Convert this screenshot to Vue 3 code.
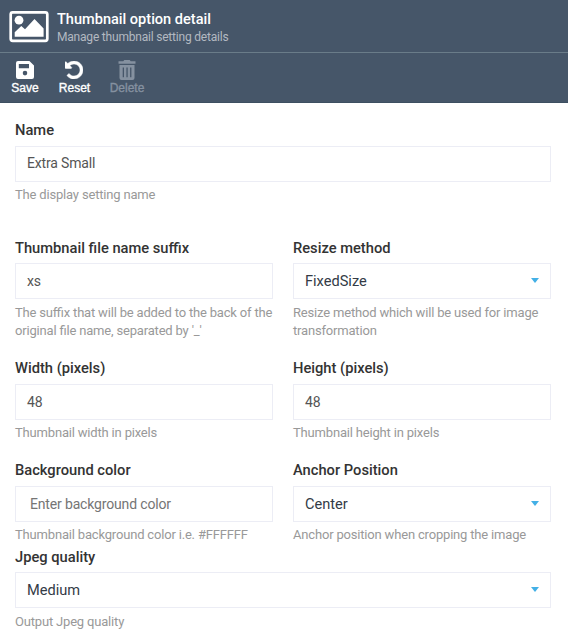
<script setup>
const rows = [
  { key: 'name', fields: [{ label: 'Name', value: 'Extra Small', hint: ['The display setting name'] }] },
  {
    key: 'suffix',
    fields: [
      { label: 'Thumbnail file name suffix', value: 'xs', hint: ['The suffix that will be added to the back of the', "original file name, separated by '_'"] },
      { label: 'Resize method', value: 'FixedSize', select: true, hint: ['Resize method which will be used for image', 'transformation'] },
    ],
  },
  {
    key: 'size',
    fields: [
      { label: 'Width (pixels)', value: '48', hint: ['Thumbnail width in pixels'] },
      { label: 'Height (pixels)', value: '48', hint: ['Thumbnail height in pixels'] },
    ],
  },
  {
    key: 'background',
    fields: [
      { label: 'Background color', value: 'Enter background color', placeholder: true, hint: ['Thumbnail background color i.e. #FFFFFF'] },
      { label: 'Anchor Position', value: 'Center', select: true, hint: ['Anchor position when cropping the image'] },
    ],
  },
  { key: 'quality', fields: [{ label: 'Jpeg quality', value: 'Medium', select: true, hint: ['Output Jpeg quality'] }] },
]
</script>

<template>
  <div class="blade">
    <header class="head">
      <svg class="picture" viewBox="0 0 40 32" width="40" height="32">
        <rect x="1.7" y="1.4" width="36.6" height="28.4" rx="2" fill="none" stroke="#fff" stroke-width="2.7" />
        <circle cx="10" cy="9.2" r="4.4" fill="#fff" />
        <path d="M5.7 25.7V21.3L12.3 15L16 18.2L25.5 8L34.6 17.4V25.7Z" fill="#fff" />
      </svg>
      <div>
        <div class="title">Thumbnail option detail</div>
        <div class="subtitle">Manage thumbnail setting details</div>
      </div>
    </header>
    <nav class="toolbar">
      <div class="tool save">
        <svg viewBox="0 0 18 18" width="18" height="18">
          <path fill="#fff" fill-rule="evenodd" d="M2 0H13.4L18 4.5V16Q18 18 16 18H2Q0 18 0 16V2Q0 0 2 0ZM2.8 3V7.3H13V3ZM9 9.8A2.3 2.3 0 1 0 9 14.4A2.3 2.3 0 1 0 9 9.8Z" />
        </svg>
        <span>Save</span>
      </div>
      <div class="tool reset">
        <svg viewBox="0 128 1536 1536" width="18" height="18">
          <path fill="#fff" stroke="#fff" stroke-width="40" d="M1536 896q0 156-61 298t-164 245-245 164-298 61q-172 0-327-72.500t-264-204.500q-7-10-6.500-22.500t8.500-20.500l137-138q10-9 25-9 16 2 23 12 73 95 179 147t225 52q104 0 198.500-40.500t163.500-109.500 109.500-163.500 40.500-198.500-40.500-198.500-109.500-163.500-163.500-109.500-198.500-40.500q-98 0-188 35.500t-160 101.500l137 138q31 30 14 69-17 40-59 40h-448q-26 0-45-19t-19-45v-448q0-42 40-59 39-17 69 14l130 129q107-101 244.500-156.500t284.500-55.500q156 0 298 61t245 164 164 245 61 298z" />
        </svg>
        <span>Reset</span>
      </div>
      <div class="tool delete">
        <svg viewBox="0 0 18 20" width="18" height="20">
          <path fill="#8591a0" fill-rule="evenodd" d="M.5 1.3H5.3L6.3 0H11.7L12.7 1.3H17.5V3.8H.5ZM1.500 5H16.500V18Q16.500 20 14.500 20H3.500Q1.500 20 1.500 18ZM4.700 7.500V17.200H6V7.500ZM8.400 7.500V17.200H9.700V7.500ZM12.100 7.500V17.200H13.400V7.500Z" />
        </svg>
        <span>Delete</span>
      </div>
    </nav>
    <main class="form">
      <div v-for="row in rows" :key="row.key" class="row" :class="row.key">
        <div v-for="field in row.fields" :key="field.label" class="field">
          <div class="label">{{ field.label }}</div>
          <div class="box" :class="{ select: field.select, placeholder: field.placeholder }">
            <span>{{ field.value }}</span>
            <svg v-if="field.select" class="arrow" viewBox="0 0 8 5" width="8" height="5"><path d="M0 0H8L4 5Z" fill="#43b0e6" /></svg>
          </div>
          <div class="hint">
            <div v-for="line in field.hint" :key="line">{{ line }}</div>
          </div>
        </div>
      </div>
    </main>
  </div>
</template>

<style>
body { margin: 0; background: #fff; }
</style>
<style scoped>
.blade { width: 568px; height: 634px; overflow: hidden; background: #fff; font-family: Roboto, "Liberation Sans", sans-serif; }
.blade * { box-sizing: border-box; white-space: nowrap; }
.blade svg { display: block; flex: none; }
.head { height: 53px; display: flex; padding: 11px 0 0 9px; gap: 8px; background: #465669; border-bottom: 1px solid #6a7c89; }
.title { font-size: 14.55px; line-height: 18px; font-weight: 500; color: #fff; }
.subtitle { font-size: 12px; line-height: 16px; letter-spacing: -.2px; color: #b3b9c1; }
.toolbar { height: 50px; display: flex; background: #465669; border-bottom: 1px solid #3d4f61; }
.tool { display: flex; flex-direction: column; align-items: center; justify-content: flex-end; padding-bottom: 6px; gap: 2px; font: 12px/15px "Liberation Sans", sans-serif; color: #fff; -webkit-text-stroke: .35px currentColor; }
.save { width: 50px; }
.reset { width: 49px; }
.reset svg { margin-right: 1px; }
.delete { width: 56px; color: #8591a0; }
.delete svg { margin-bottom: -1px; }
.form { padding: 18px 17px 0 15px; }
.row { display: grid; gap: 20px; grid-template-columns: 1fr 1fr; }
.name, .quality { grid-template-columns: 1fr; }
.name { height: 118px; }
.suffix { height: 120px; }
.size { height: 102px; }
.background { height: 87px; }
.label { height: 25px; font-size: 14.7px; line-height: 18px; font-weight: 500; color: #333; }
.suffix .label, .quality .label { height: 24px; }
.box { height: 36px; border: 1px solid #ecedf5; padding: 0 11px; display: flex; align-items: center; justify-content: space-between; font-size: 14px; letter-spacing: -.16px; color: #555; }
.name .box { padding-bottom: 2px; }
.select { font-size: 14.6px; letter-spacing: 0; color: #333b46; }
.placeholder { padding-left: 14px; color: #757575; }
.arrow { margin-top: -2px; }
.hint { margin-top: 5px; font-size: 13px; line-height: 17.5px; letter-spacing: -.18px; font-feature-settings: "liga" 1; color: #999; }
.name .hint, .size .hint, .background .hint { margin-top: 4px; }
</style>
